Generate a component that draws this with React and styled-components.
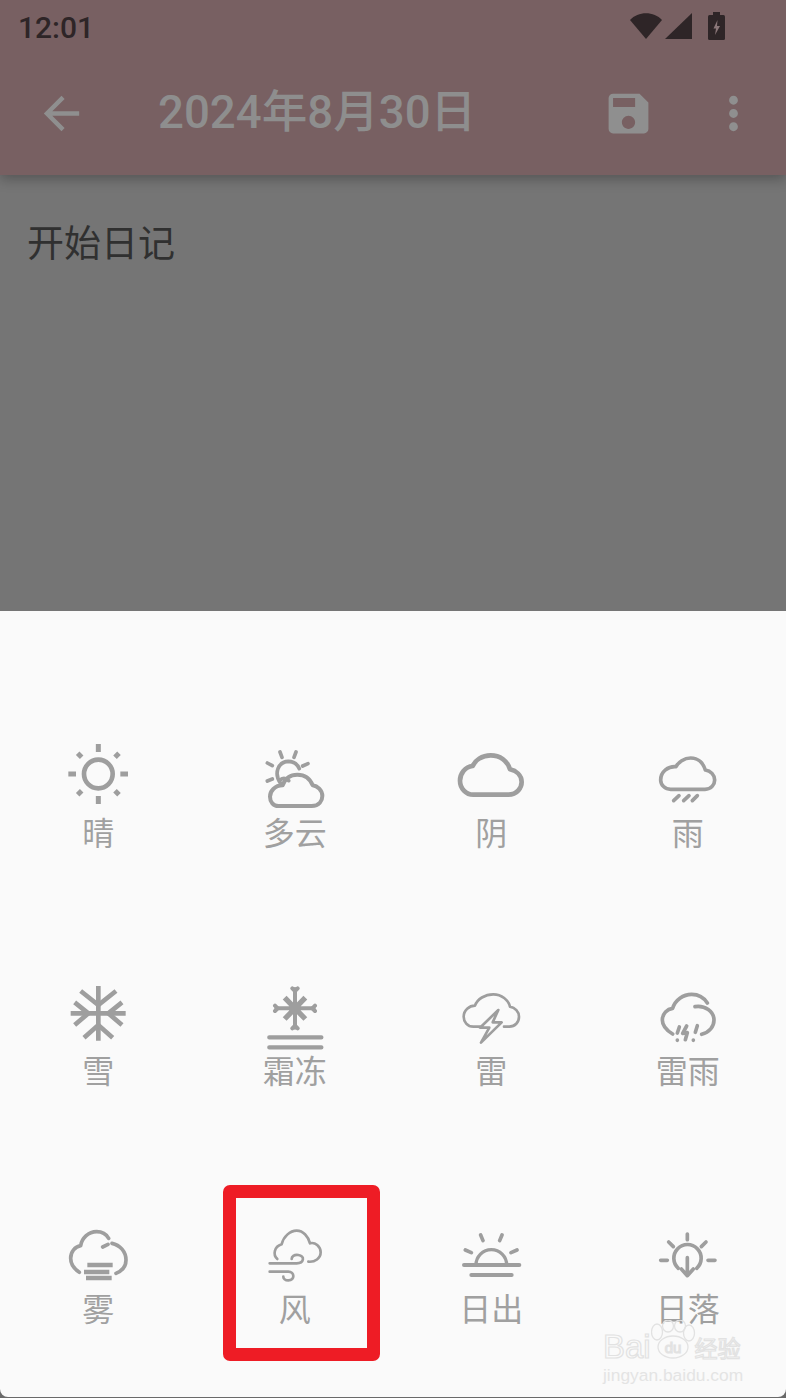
import React from "react";
import styled, { createGlobalStyle } from "styled-components";

const GlobalStyle = createGlobalStyle`
  html, body {
    margin: 0;
    padding: 0;
    background: #6a6a6a;
  }
  * {
    box-sizing: border-box;
  }
`;

const Page = styled.div`
  position: relative;
  width: 786px;
  height: 1398px;
  display: flex;
  flex-direction: column;
  overflow: hidden;
  font-family: Roboto, "Noto Sans CJK SC", sans-serif;
`;

const Header = styled.header`
  height: 175px;
  background: #786062;
  box-shadow: 0 4px 12px rgba(0, 0, 0, 0.28);
  position: relative;
  z-index: 1;
`;

const StatusBar = styled.div`
  height: 54px;
  display: flex;
  align-items: center;
  padding: 0 60px 0 18px;
  color: #2e2527;
`;

const Clock = styled.span`
  font-size: 30px;
  font-weight: 500;
  margin-right: auto;
`;

const Toolbar = styled.div`
  height: 121px;
  padding: 0 26px 3px 35px;
  display: flex;
  align-items: center;
  color: #8f8f8f;
`;

const Title = styled.h1`
  margin: 0 auto 0 70px;
  font-size: 45.6px;
  font-weight: 500;
  line-height: 52px;
  color: #8e8e8e;
`;

const ToolIcon = styled.svg`
  width: 53px;
  height: 53px;
  fill: currentColor;
  margin-left: ${(p) => p.$gap || 0}px;
`;

const Body = styled.main`
  height: 436px;
  background: #757575;
  padding: 46px 27px 0;
  font-size: 37px;
  line-height: 48px;
  color: #303030;
`;

const Sheet = styled.section`
  height: 786px;
  background: #fafafa;
  border-radius: 0 0 8px 8px;
  padding-top: 123px;
  display: grid;
  grid-template-columns: repeat(4, 1fr);
  grid-auto-rows: 238px;
  align-content: start;
`;

const Cell = styled.div`
  position: relative;
  display: flex;
  flex-direction: column;
  align-items: center;
`;

const WeatherIcon = styled.svg`
  display: block;
  width: 80px;
  height: 80px;
  fill: none;
  stroke: #9e9e9e;
  stroke-linecap: round;
  stroke-linejoin: round;
`;

const Label = styled.span`
  margin-top: 1px;
  font-size: 32px;
  line-height: 38px;
  color: #a0a0a0;
`;

const Highlight = styled.div`
  position: absolute;
  left: 26px;
  top: -25px;
  width: 157px;
  height: 176px;
  border: 13px solid #ee1c25;
  border-radius: 7px;
`;

const Watermark = styled.div`
  position: absolute;
  left: 603px;
  top: 1327px;
  width: 140px;
`;

const MarkTop = styled.div`
  display: flex;
  align-items: center;
  font-size: 33px;
  line-height: 38px;
  font-family: "Liberation Sans", sans-serif;
  color: transparent;
  -webkit-text-stroke: 1.2px #e2e2e2;
`;

const MarkDu = styled.span`
  font-size: 15px;
  margin: 2px 13px 0 14px;
`;

const MarkCn = styled.span`
  font-size: 23px;
  font-family: "Noto Sans CJK SC", sans-serif;
`;

const MarkUrl = styled.div`
  font-size: 17.4px;
  line-height: 16px;
  font-family: "Liberation Sans", sans-serif;
  color: #e4e4e4;
`;

const Paw = styled.svg`
  position: absolute;
  left: 48px;
  top: -7px;
  width: 50px;
  height: 44px;
  fill: none;
  stroke: #e2e2e2;
  stroke-width: 1.3;
`;

const Sun = () => (
  <WeatherIcon viewBox="54 12 240 240">
    <circle cx="175" cy="132" r="43" strokeWidth="14" />
    <path
      strokeWidth="15"
      strokeLinecap="butt"
      d="M175 42v24M175 198v24M85 132h23M241 132h23M113 70l12 12M237 70l-12 12M113 194l12-12M237 194l-12-12"
    />
  </WeatherIcon>
);

const PartlyCloudy = () => (
  <WeatherIcon viewBox="645 12 240 240" strokeWidth="11">
    <path
      strokeWidth="12"
      d="M715 228H815C838 228 847 212 847 198C847 180 832 168 818 166C810 145 795 134 772 134C750 134 735 146 728 166C704 166 690 184 690 200C690 216 700 228 715 228Z"
    />
    <path d="M722 160C700 130 715 95 745 94C760 94 772 102 778 116M720 150C730 142 740 146 746 152" />
    <path d="M720 66l6 16M768 66l-6 16M682 99l15 8M682 153l15-6M804 101l-16 7" />
  </WeatherIcon>
);

const Overcast = () => (
  <WeatherIcon viewBox="63 12 240 240" strokeWidth="14">
    <path d="M130 194H235C262 194 275 172 275 156C275 135 258 122 240 118C232 92 210 76 182 76C155 76 135 92 128 108C105 110 90 132 90 152C90 175 108 194 130 194Z" />
  </WeatherIcon>
);

const Rain = () => (
  <WeatherIcon viewBox="654 12 240 240" strokeWidth="11">
    <path d="M722 178H825C845 178 854 162 854 150C854 135 842 122 826 120C820 100 805 84 782 84C762 84 745 97 738 110C715 108 692 125 692 150C692 165 705 178 722 178Z" />
    <path d="M731 212l16-15M761 212l16-15M787 212l15-15" />
  </WeatherIcon>
);

const Snow = () => (
  <WeatherIcon viewBox="54 -9 240 240" strokeWidth="14">
    <path strokeLinecap="butt" d="M175 33V197M92 115H257" />
    <path
      strokeLinecap="butt"
      strokeLinejoin="miter"
      d="M122 48L175 90L228 48M104 82L145 115L104 150M246 82L205 115L246 150M132 188L175 150L218 188"
    />
  </WeatherIcon>
);

const Frost = () => (
  <WeatherIcon viewBox="645 -9 240 240">
    <path strokeWidth="13" d="M688 187H844M688 217H844" />
    <path strokeWidth="16" strokeLinecap="butt" d="M734 68L796 132M796 68L734 132" />
    <path strokeWidth="12" d="M765 42V158M709 100H821" />
    <path strokeWidth="12" d="M757 40L765 48L773 40M757 160L765 152L773 160M705 92L713 100L705 108M825 92L817 100L825 108" />
    <circle cx="765" cy="100" r="18" fill="#9e9e9e" strokeWidth="0" />
  </WeatherIcon>
);

const Thunder = () => (
  <WeatherIcon viewBox="63 -9 240 240" strokeWidth="8">
    <path d="M150 155H130C112 155 101 140 101 125C101 105 118 92 135 92C142 72 165 58 190 58C215 58 235 75 240 95C255 98 267 110 267 125C267 142 255 155 238 155H222" />
    <path d="M205 105L150 158H178L153 203L215 142H188Z" />
  </WeatherIcon>
);

const ThunderRain = () => (
  <WeatherIcon viewBox="654 -9 240 240" strokeWidth="11">
    <path d="M728 177C708 165 697 150 697 135C697 115 712 102 728 100C735 75 760 58 785 58C805 58 822 68 832 84" />
    <path d="M795 95C825 90 852 110 852 135C852 155 838 172 815 178" />
    <path d="M748 156L742 174M770 153L758 175L772 173L766 194M802 152L796 172M742 195V196M790 195V196" />
  </WeatherIcon>
);

const Fog = () => (
  <WeatherIcon viewBox="54 105 240 240" strokeWidth="11">
    <path d="M118 292C100 280 92 265 92 250C92 230 105 215 122 212C125 190 145 170 170 170C185 170 198 176 206 190" />
    <path d="M188 216L204 208M216 205C240 210 258 230 258 255C258 275 245 288 228 295" />
    <path strokeWidth="13" strokeLinecap="butt" d="M142 270H218M132 291H208M138 309H215" />
  </WeatherIcon>
);

const Wind = () => (
  <WeatherIcon viewBox="645 105 240 240" strokeWidth="8">
    <path d="M712 252C698 240 702 215 725 208C730 185 750 167 770 167C790 167 805 185 810 205C825 200 842 215 842 232C842 250 825 262 805 260" />
    <path d="M689 265H770C792 265 796 243 775 240C762 238 755 245 755 252" />
    <path d="M689 290H745C764 290 766 316 745 316C735 316 730 310 730 305" />
  </WeatherIcon>
);

const Sunrise = () => (
  <WeatherIcon viewBox="63 -15 240 240">
    <path strokeWidth="12" d="M102 150H268M124 180H245" />
    <path strokeWidth="10" d="M138 150A46 46 0 0 1 230 150" />
    <path strokeWidth="11" d="M152 60l7 17M216 60l-7 17M106 105l18 8M261 105l-18 8" />
  </WeatherIcon>
);

const Sunset = () => (
  <WeatherIcon viewBox="654 -15 240 240" strokeWidth="11">
    <path d="M745 160A41 41 0 1 1 800 160" />
    <path d="M772 128V180M754 162L772 182L790 162" />
    <path d="M772 57V74M716 81L730 95M828 81L814 95M692 136H712M834 136H855" />
  </WeatherIcon>
);

const weather = [
  { name: "晴", Icon: Sun },
  { name: "多云", Icon: PartlyCloudy },
  { name: "阴", Icon: Overcast },
  { name: "雨", Icon: Rain },
  { name: "雪", Icon: Snow },
  { name: "霜冻", Icon: Frost },
  { name: "雷", Icon: Thunder },
  { name: "雷雨", Icon: ThunderRain },
  { name: "雾", Icon: Fog },
  { name: "风", Icon: Wind, marked: true },
  { name: "日出", Icon: Sunrise },
  { name: "日落", Icon: Sunset },
];

const App = () => {
  return (
    <>
      <GlobalStyle />
      <Page>
        <Header>
          <StatusBar>
            <Clock>12:01</Clock>
            <svg width="96" height="32" viewBox="0 0 96 32" fill="#2e2527">
              <path d="M0 9C8 0 24 0 32 9L16 28Z" />
              <path d="M62 2V28H35Z" />
              <rect x="78" y="4" width="17" height="25" rx="1.5" />
              <rect x="83" y="1" width="7" height="4" />
              <path d="M87.5 9L83.5 17.5H86L85 24L90 15H87L87.5 9Z" fill="#8a7678" />
            </svg>
          </StatusBar>
          <Toolbar>
            <ToolIcon viewBox="0 0 24 24">
              <path d="M20 11H7.83l5.59-5.59L12 4l-8 8 8 8 1.41-1.41L7.83 13H20v-2z" />
            </ToolIcon>
            <Title>2024年8月30日</Title>
            <ToolIcon viewBox="0 0 24 24">
              <path d="M17 3H5c-1.11 0-2 .9-2 2v14c0 1.1.89 2 2 2h14c1.1 0 2-.9 2-2V7l-4-4zm-5 16c-1.66 0-3-1.34-3-3s1.34-3 3-3 3 1.34 3 3-1.34 3-3 3zm3-10H5V5h10v4z" />
            </ToolIcon>
            <ToolIcon viewBox="0 0 24 24" $gap={52}>
              <path d="M12 8c1.1 0 2-.9 2-2s-.9-2-2-2-2 .9-2 2 .9 2 2 2zm0 2c-1.1 0-2 .9-2 2s.9 2 2 2 2-.9 2-2-.9-2-2-2zm0 6c-1.1 0-2 .9-2 2s.9 2 2 2 2-.9 2-2-.9-2-2-2z" />
            </ToolIcon>
          </Toolbar>
        </Header>
        <Body>开始日记</Body>
        <Sheet>
          {weather.map(({ name, Icon, marked }) => (
            <Cell key={name}>
              <Icon />
              <Label>{name}</Label>
              {marked && <Highlight />}
            </Cell>
          ))}
        </Sheet>
        <Watermark>
          <Paw viewBox="0 0 50 44">
            <ellipse cx="22" cy="27" rx="15" ry="11" />
            <ellipse cx="6" cy="12" rx="5.5" ry="8" />
            <ellipse cx="17" cy="6" rx="5.5" ry="6" />
            <ellipse cx="29" cy="6" rx="5.5" ry="6" />
            <ellipse cx="38" cy="13" rx="5.5" ry="8" />
          </Paw>
          <MarkTop>
            Bai
            <MarkDu>du</MarkDu>
            <MarkCn>经验</MarkCn>
          </MarkTop>
          <MarkUrl>jingyan.baidu.com</MarkUrl>
        </Watermark>
      </Page>
    </>
  );
};

export default App;
